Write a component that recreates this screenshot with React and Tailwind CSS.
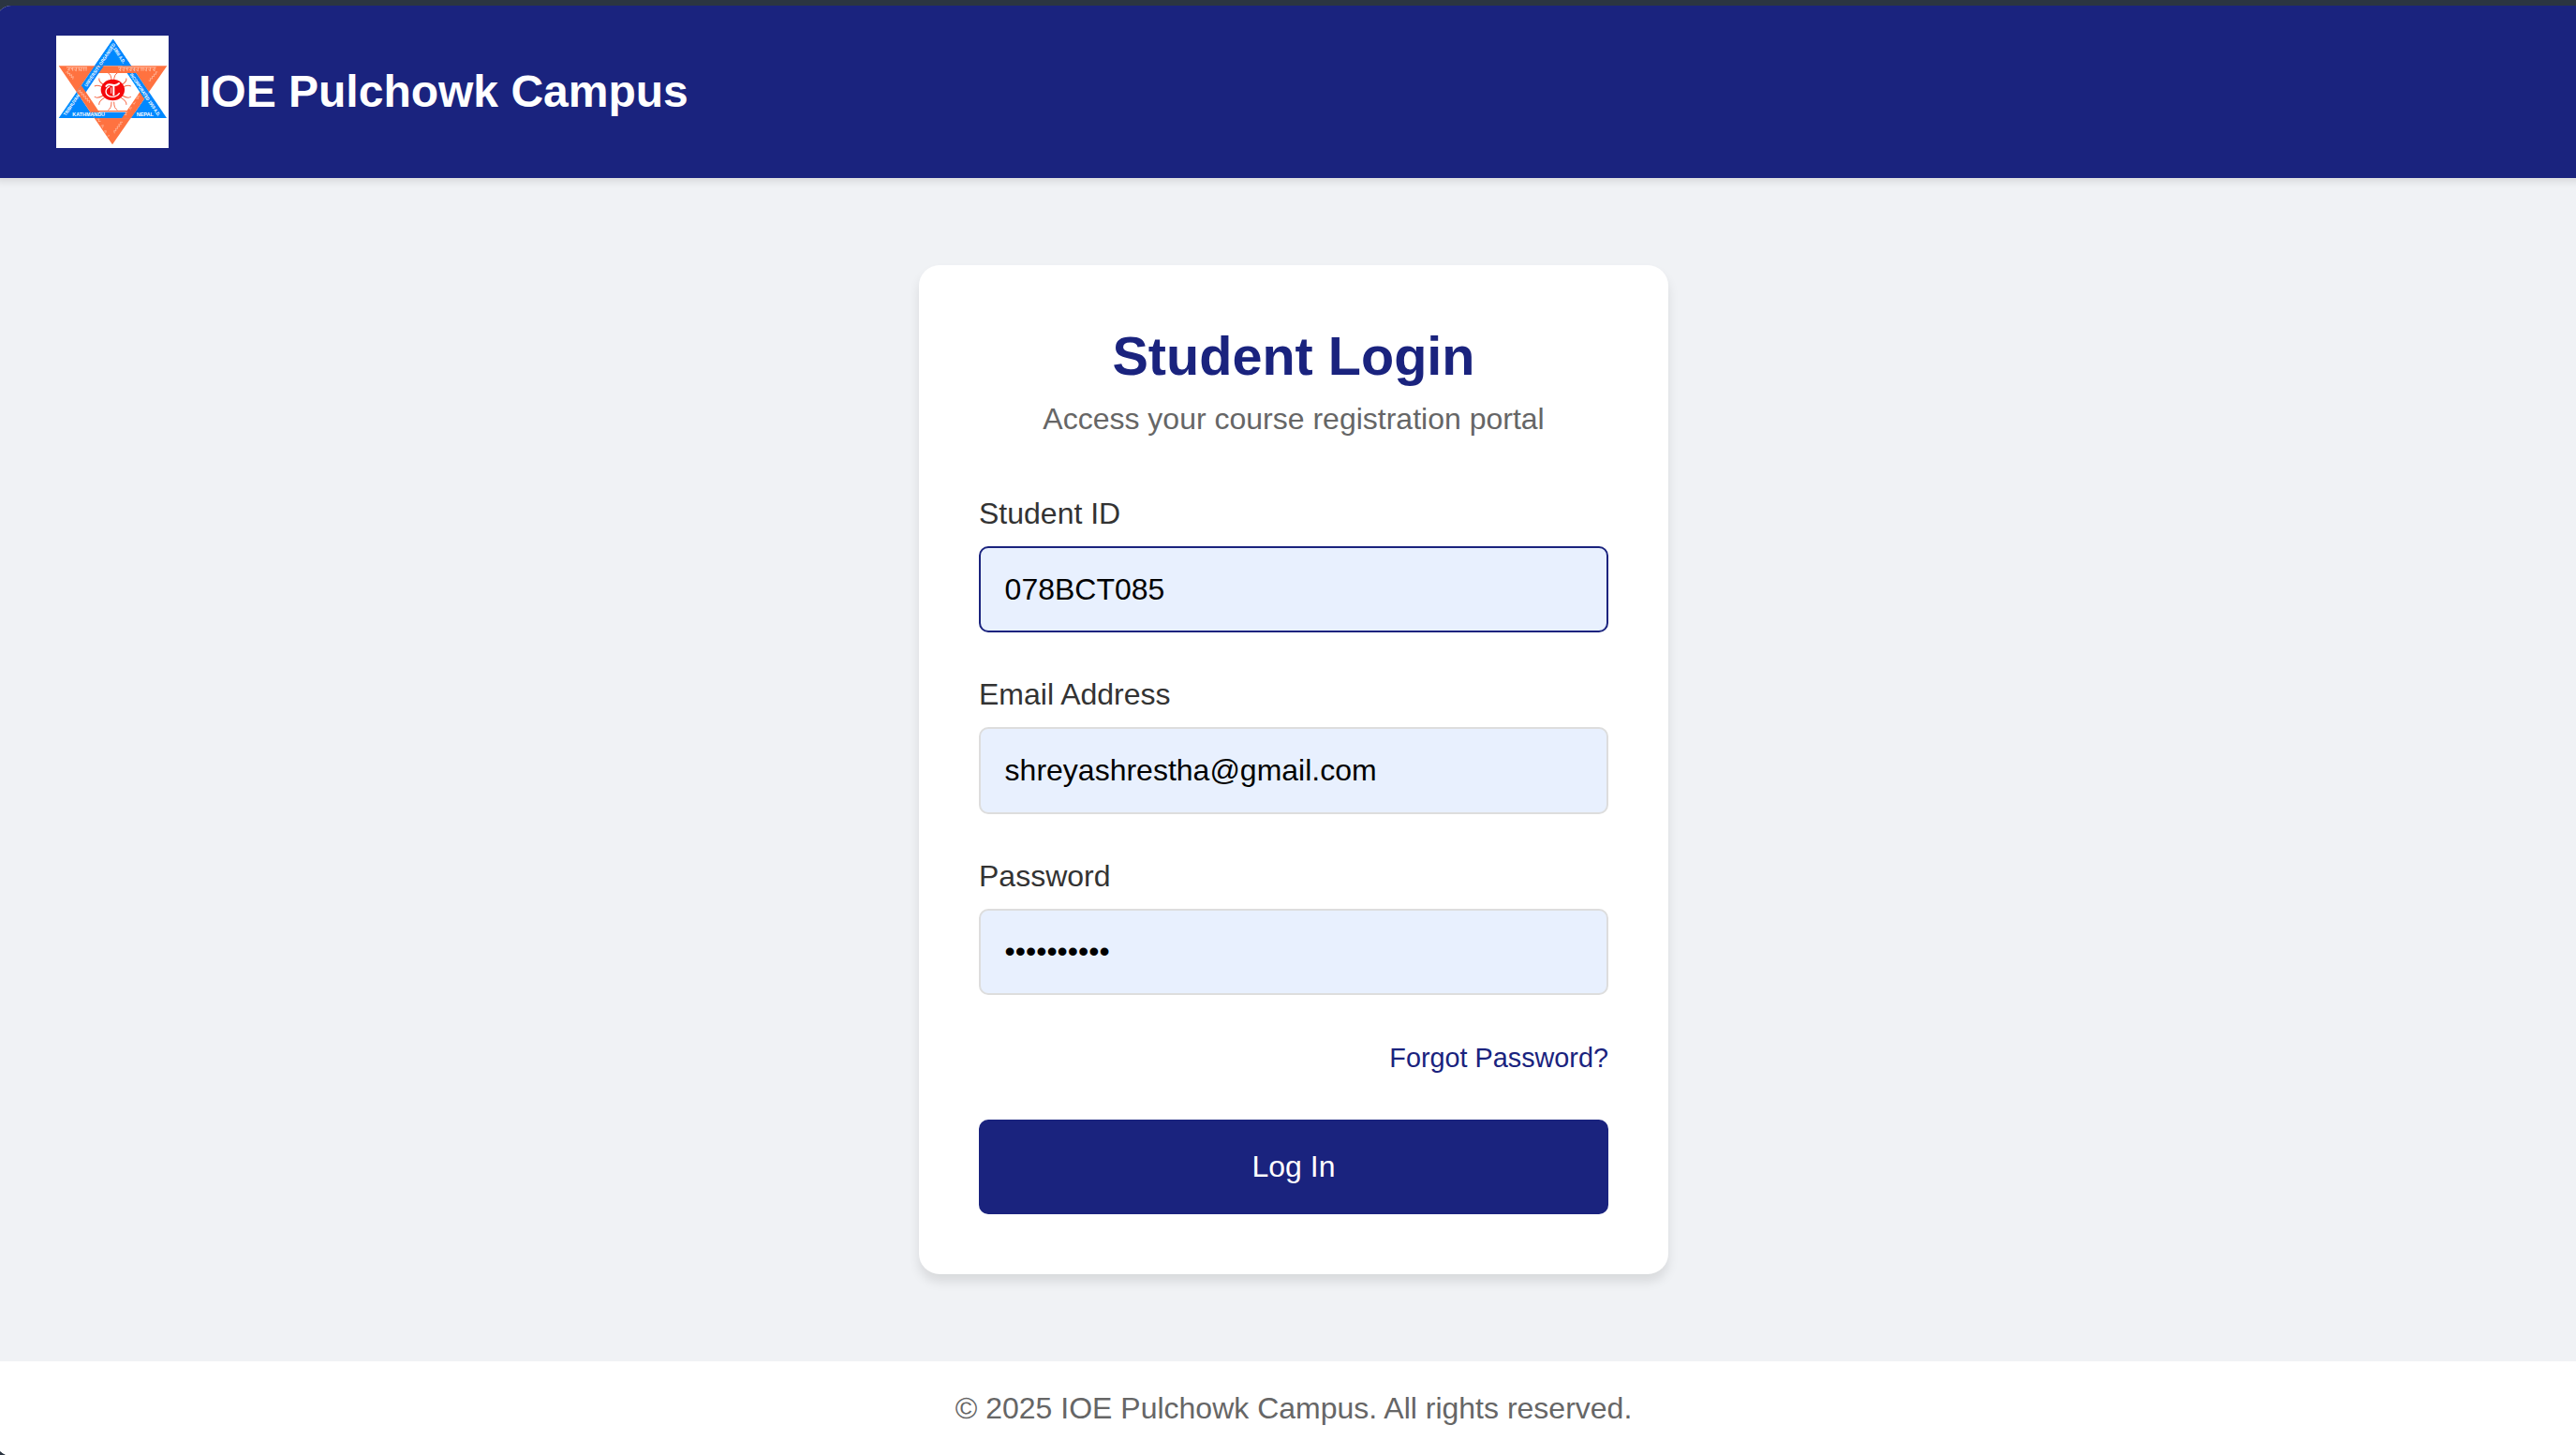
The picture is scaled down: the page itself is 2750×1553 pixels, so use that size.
const ORANGE = "#ff7240";
const BLUE = "#0088ff";

// Interlaced six-pointed star emblem, drawn on a 360 x 360 canvas.
function Emblem() {
  const gaps = [0, 60, 120, 180, 240, 300];
  return (
    <svg viewBox="0 0 360 360" className="size-[120px] shrink-0 bg-white" role="img" aria-label="Campus logo">
      <defs>
        <clipPath id="hex">
          <polygon points="123,97 240,97 297,181 239,265 123,265 66,181" />
        </clipPath>
      </defs>
      <polygon points="182,11 8,264 354,264" fill={BLUE} />
      <polygon points="8,97 355,97 180,349" fill={ORANGE} />
      <polygon points="182,11 123,97 240,97" fill={BLUE} />
      <g clipPath="url(#hex)">
        <rect x="60" y="90" width="250" height="180" fill="#fff" />
        {gaps.map((a) => (
          <g key={a} transform={`rotate(${a} 181 179)`} fill="none" stroke="#f76a48" strokeWidth="3">
            <path d="M166 120 Q177 124 177 146 M196 120 Q185 124 185 146" />
          </g>
        ))}
        <g fill="none" strokeWidth="48">
          <path d="M143 67 L46 211" stroke={BLUE} />
          <path d="M46 151 L143 295" stroke={ORANGE} />
          <path d="M90 265 H280" stroke={BLUE} strokeWidth="40" />
          <path d="M100 242 H262" stroke={ORANGE} strokeWidth="4" />
          <path d="M219 294 L317 151" stroke={ORANGE} />
          <path d="M220 67 L317 211" stroke={BLUE} />
          <path d="M90 97 H280" stroke={ORANGE} strokeWidth="46" />
        </g>
        <polygon points="123,97 153,97 136,121 106,121" fill={BLUE} />
      </g>
      <ellipse cx="181" cy="174" rx="38" ry="34" fill="#f5080c" />
      <g fill="none" stroke="#fff" strokeLinecap="round">
        <path d="M160 162 C167 151 175 159 184 159 C192 160 197 157 201 153" strokeWidth="6" />
        <path d="M170 164 C156 170 156 188 168 193 C179 199 196 196 202 185" strokeWidth="4" />
        <path d="M184 160 V190" strokeWidth="6" />
        <path d="M176 167 V184" strokeWidth="2.5" />
      </g>
      <g fill="#fff" fontFamily="'Liberation Sans', sans-serif" fontWeight="700" fontSize="15">
        <text x="52" y="258" textLength="104" lengthAdjust="spacingAndGlyphs">KATHMANDU</text>
        <text x="257" y="258" textLength="55" lengthAdjust="spacingAndGlyphs">NEPAL</text>
        <text transform="translate(31 258) rotate(-56)" textLength="80" lengthAdjust="spacingAndGlyphs">TRIBHUVAN</text>
        <text transform="translate(98 165) rotate(-56)" textLength="164" lengthAdjust="spacingAndGlyphs">UNIVERSITY ORGANISED</text>
        <text transform="translate(182 42) rotate(57)" textLength="58" lengthAdjust="spacingAndGlyphs">1956 A.D.</text>
        <text transform="translate(235 125) rotate(56)" textLength="162" lengthAdjust="spacingAndGlyphs">INCORPORATED 1959 A.D.</text>
      </g>
      <g fill="none" stroke="#ffd9c8" strokeLinejoin="round">
        <path d="M33 102 H99 M198 102 H320" strokeWidth="2" />
        <path
          d="M42 102 v11 m0 -6 l-6 4 M53 102 v11 m-5 -9 l3 5 M64 102 v11 l-6 -5 M73 102 v11 m8 -11 v11 l-6 -4 M89 102 v11 m7 -11 v11 M206 102 v11 l-5 -5 M217 102 v11 l-6 -5 M228 102 v11 m-5 -8 l4 4 M240 102 v11 l-6 -4 M251 102 v11 l-5 -6 M262 102 v11 l-6 -4 M273 102 v11 m6 -11 v11 M289 102 v11 l-6 -5 M301 102 v11 l-6 -5 M315 102 v11 l-6 -5"
          strokeWidth="2"
        />
        <path
          d="M31 118 l7 -3 l-1 8 l7 -3 l-1 8 l7 -3 l-2 9 l7 -3 l-2 9 M69 178 l8 -3 l-2 8 l8 -2 l-2 9 l8 -3 l-2 9 l8 -2 l-2 9 l8 -2 l-2 9 l8 -2 l-1 8"
          strokeWidth="1.6"
        />
        <path
          d="M325 117 l-6 -1 l1 8 l-7 -1 l1 8 l-7 -1 l1 8 l-7 -1 l1 8 l-6 -1 M268 195 l-8 -1 l3 8 l-8 -1 M254 212 l-5 8 l-4 -5 M243 231 l-8 0 l3 7 M229 245 l-7 1 l3 8 l-8 -1"
          strokeWidth="1.6"
        />
        <path
          d="M130 268 l8 -1 l-3 8 l8 -1 M143 289 l8 -2 l-3 9 M153 306 l7 -1 l-2 8 M164 322 l7 -2 M213 277 l-8 0 l3 7 l-8 0 l3 7 l-8 0 l2 7 l-7 0 l2 7 l-7 0 l2 8"
          strokeWidth="1.6"
        />
      </g>
    </svg>
  );
}

function Field({ label, id, type = "text", value, active = false }) {
  return (
    <div className="mb-12">
      <label htmlFor={id} className="mb-4 block text-[#333]">
        {label}
      </label>
      <input
        id={id}
        type={type}
        defaultValue={value}
        className={`block h-[92.2px] w-full rounded-[10px] border-2 bg-[#e8f0fe] px-[25.6px] leading-[37px] text-black outline-none ${
          active ? "border-[#1a237e]" : "border-[#ddd]"
        }`}
      />
    </div>
  );
}

export default function App() {
  return (
    <div className="h-[1553px] w-full overflow-hidden bg-[#2b3541] pt-1.5 font-['Liberation_Sans',Arial,sans-serif] text-[32px] leading-[37px]">
      <div className="-ml-1 flex h-[1548px] w-[2770px] flex-col overflow-hidden rounded-2xl bg-[#f0f2f5]">
        <header className="z-10 flex h-[184px] shrink-0 items-center gap-8 bg-[#1a237e] px-16 shadow-[0_4px_8px_rgba(0,0,0,0.1)]">
          <Emblem />
          <h1 className="text-[48px] leading-[54px] font-bold text-white">IOE Pulchowk Campus</h1>
        </header>

        <main className="flex grow items-center justify-center">
          <div className="w-[800px] rounded-[22px] bg-white p-16 shadow-[0_8px_12px_rgba(0,0,0,0.1)]">
            <div className="mb-16 text-center">
              <h2 className="mb-4 text-[57.6px] leading-[66px] font-bold text-[#1a237e]">Student Login</h2>
              <p className="text-[#666]">Access your course registration portal</p>
            </div>
            <form onSubmit={(e) => e.preventDefault()}>
              <Field label="Student ID" id="student-id" value="078BCT085" active />
              <Field label="Email Address" id="email" value="shreyashrestha@gmail.com" />
              <Field label="Password" id="password" type="password" value="abcdefghij" />
              <div className="mb-12 h-[37px] text-right">
                <a href="#" className="text-[28.8px] text-[#1a237e]">
                  Forgot Password?
                </a>
              </div>
              <button type="submit" className="block h-[101px] w-full rounded-[10px] bg-[#1a237e] text-white">
                Log In
              </button>
            </form>
          </div>
        </main>

        <footer className="h-[101px] shrink-0 bg-white py-8 text-center text-[#666]">
          © 2025 IOE Pulchowk Campus. All rights reserved.
        </footer>
      </div>
    </div>
  );
}
